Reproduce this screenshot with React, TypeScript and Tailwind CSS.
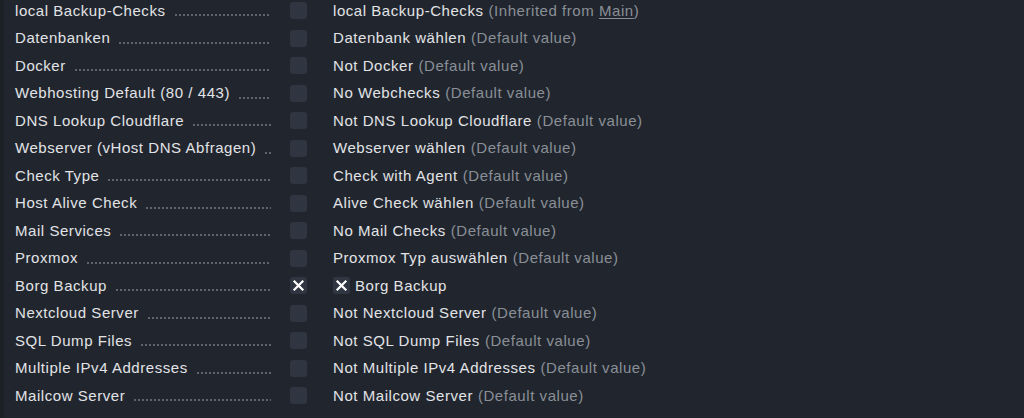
import React from 'react';

type Row = {
  label: string;
  value: string;
  note?: 'default' | 'inherited';
  checked?: boolean;
};

const rows: Row[] = [
  { label: 'local Backup-Checks', value: 'local Backup-Checks', note: 'inherited' },
  { label: 'Datenbanken', value: 'Datenbank wählen', note: 'default' },
  { label: 'Docker', value: 'Not Docker', note: 'default' },
  { label: 'Webhosting Default (80 / 443)', value: 'No Webchecks', note: 'default' },
  { label: 'DNS Lookup Cloudflare', value: 'Not DNS Lookup Cloudflare', note: 'default' },
  { label: 'Webserver (vHost DNS Abfragen)', value: 'Webserver wählen', note: 'default' },
  { label: 'Check Type', value: 'Check with Agent', note: 'default' },
  { label: 'Host Alive Check', value: 'Alive Check wählen', note: 'default' },
  { label: 'Mail Services', value: 'No Mail Checks', note: 'default' },
  { label: 'Proxmox', value: 'Proxmox Typ auswählen', note: 'default' },
  { label: 'Borg Backup', value: 'Borg Backup', checked: true },
  { label: 'Nextcloud Server', value: 'Not Nextcloud Server', note: 'default' },
  { label: 'SQL Dump Files', value: 'Not SQL Dump Files', note: 'default' },
  { label: 'Multiple IPv4 Addresses', value: 'Not Multiple IPv4 Addresses', note: 'default' },
  { label: 'Mailcow Server', value: 'Not Mailcow Server', note: 'default' },
];

const Cross = () => (
  <svg width="13" height="13" viewBox="0 0 13 13" fill="none">
    <path d="M2.5 2.5l8 8M10.5 2.5l-8 8" stroke="#ffffff" strokeWidth="2.2" strokeLinecap="square" />
  </svg>
);

export default function App() {
  return (
    <div
      className="w-[1024px] h-[418px] overflow-hidden bg-[#21262e] border-l-4 border-[#1b1f26] text-[15px] tracking-[0.55px] text-[#e1e3e6]"
      style={{ fontFamily: '"Liberation Sans", Arial, sans-serif' }}
    >
      <div className="-mt-[3px] pl-[11px]">
        {rows.map((r) => (
          <div key={r.label} className="flex items-center h-[27.5px]">
            {/* Bezeichnung mit Punktlinie */}
            <div className="flex items-end w-[256px] whitespace-nowrap">
              <span className="shrink-0">{r.label}</span>
              <div className="ml-[8px] mb-[6px] flex-1 h-[2px] bg-[radial-gradient(circle,#60666f_0.7px,transparent_1.05px)] bg-size-[4px_2px] bg-repeat-x" />
            </div>
            {/* Checkbox */}
            <div className="ml-[19px] w-[17px] h-[17px] rounded-[3px] bg-[#2f3541] flex items-center justify-center">
              {r.checked && <Cross />}
            </div>
            {/* Wert */}
            <div className="ml-[26px] flex items-center whitespace-nowrap">
              {r.checked && (
                <span className="mr-[5px] w-[17px] h-[17px] rounded-[2px] bg-[#2f3541] flex items-center justify-center">
                  <Cross />
                </span>
              )}
              <span>{r.value}</span>
              {r.note === 'default' && <span className="ml-[5px] text-[#8a8f97]">(Default value)</span>}
              {r.note === 'inherited' && (
                <span className="ml-[5px] text-[#8a8f97]">
                  (Inherited from <span className="underline underline-offset-2">Main</span>)
                </span>
              )}
            </div>
          </div>
        ))}
      </div>
    </div>
  );
}
